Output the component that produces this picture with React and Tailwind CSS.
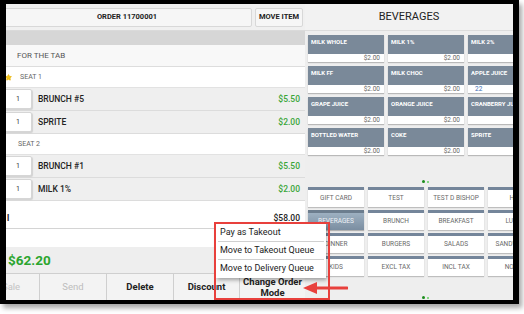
import { Star } from 'lucide-react'

const drinks = [
  { name: 'MILK WHOLE', price: '$2.00' },
  { name: 'MILK 1%', price: '$2.00' },
  { name: 'MILK 2%', price: '$2.00' },
  { name: 'MILK FF', price: '$2.00' },
  { name: 'MILK CHOC', price: '$2.00' },
  { name: 'APPLE JUICE', price: '$2.00', count: '22' },
  { name: 'GRAPE JUICE', price: '$2.00' },
  { name: 'ORANGE JUICE', price: '$2.00' },
  { name: 'CRANBERRY JUICE', price: '$2.00' },
  { name: 'BOTTLED WATER', price: '$2.00' },
  { name: 'COKE', price: '$2.00' },
  { name: 'SPRITE', price: '$2.00' },
]

const categories = [
  'GIFT CARD', 'TEST', 'TEST D BISHOP', 'HOT',
  'BEVERAGES', 'BRUNCH', 'BREAKFAST', 'LUNCH',
  'DINNER', 'BURGERS', 'SALADS', 'SANDWICHES',
  'KIDS', 'EXCL TAX', 'INCL TAX', 'NO TAX',
]

function ItemRow({ name, price }) {
  return (
    <div className="h-[23px] flex items-center bg-[#efefef] border-b border-[#dcdcdc] pr-[5px]">
      <div className="ml-[-2px] w-[28px] h-[20px] bg-white border border-[#d6d6d6] rounded-[2px] shadow-[1px_1px_1px_rgba(0,0,0,0.12)] flex items-center justify-center text-[7px] text-[#333]">
        1
      </div>
      <span className="ml-[6px] text-[8.5px] font-medium text-[#222]">{name}</span>
      <span className="ml-auto text-[8.5px] font-medium text-[#3aa63a]">{price}</span>
    </div>
  )
}

function SeatRow({ label, star }) {
  return (
    <div className="h-[21px] flex items-center bg-white border-b border-[#e2e2e2] pl-[3px]">
      {star ? (
        <Star size={7} className="ml-[-4px] mr-[8px] text-[#e8b100] fill-[#f3c21a]" />
      ) : (
        <span className="w-[9px]" />
      )}
      <span className="text-[7px] text-[#666]">{label}</span>
    </div>
  )
}

function DrinkTile({ d }) {
  return (
    <div className="w-[76px] h-[27px] flex flex-col shadow-[0_1px_1px_rgba(0,0,0,0.22)]">
      <div className="h-[19px] bg-[#7a8999] px-[3px] pt-[4px] text-[6px] font-bold leading-none text-white whitespace-nowrap overflow-hidden">
        {d.name}
      </div>
      <div className="h-[8px] bg-white flex items-center justify-between px-[4px] text-[6.5px] leading-none">
        <span className="pl-[3px] text-[#3d6db4]">{d.count || ''}</span>
        <span className="text-[#666]">{d.price}</span>
      </div>
    </div>
  )
}

function CategoryTile({ label }) {
  const active = label === 'BEVERAGES'
  return (
    <div
      className={
        active
          ? 'h-[20px] border-t-[3px] border-[#6c7d8e] bg-gradient-to-b from-[#9db0c1] to-[#7b8ea1] flex items-center justify-center text-[6.5px] text-[#eef2f6] whitespace-nowrap overflow-hidden shadow-[0_1px_1px_rgba(0,0,0,0.25)]'
          : 'h-[20px] border-t-[3px] border-[#74859a] bg-white flex items-center justify-center text-[6.5px] text-[#6a6a6a] whitespace-nowrap overflow-hidden shadow-[0_1px_1px_rgba(0,0,0,0.2)]'
      }
    >
      {label}
    </div>
  )
}

function Dots() {
  return (
    <div className="ml-[117px] h-[3px] flex items-center gap-[2px]">
      <span className="w-[3px] h-[3px] rounded-full bg-[#1c8c1c]" />
      <span className="w-[2px] h-[2px] rounded-full bg-[#63d063]" />
    </div>
  )
}

export default function App() {
  return (
    <div className="relative w-[524px] h-[314px] bg-white overflow-hidden font-['Roboto',sans-serif]">
      <div className="w-[519px] h-[304px] border-l-[6px] border-r-[6px] border-t-[4px] border-b-[4px] border-black shadow-[3px_4px_5px_rgba(0,0,0,0.35)] flex overflow-hidden bg-[#eeeeee]">
        {/* order panel */}
        <div className="w-[299px] shrink-0 flex flex-col bg-white">
          <div className="h-[27px] flex items-center gap-[3px] pr-[2px] bg-[#f0f0f0] border-b border-[#dadada]">
            <div className="ml-[-4px] flex-1 h-[19px] bg-[#f6f6f6] border border-[#d8d8d8] rounded-[2px] flex items-center justify-center text-[7.5px] font-bold text-[#222]">
              ORDER 11700001
            </div>
            <div className="w-[48px] h-[19px] bg-[#f6f6f6] border border-[#d8d8d8] rounded-[2px] flex items-center justify-center text-[7.5px] font-bold text-[#222]">
              MOVE ITEM
            </div>
          </div>
          <div className="h-[14px] bg-[#d6d6d6]" />
          <div className="h-[22px] flex items-center bg-[#f8f8f8] border-b border-[#dddddd] pl-[11px] text-[8px] text-[#555]">
            FOR THE TAB
          </div>
          <SeatRow label="SEAT 1" star />
          <ItemRow name="BRUNCH #5" price="$5.50" />
          <ItemRow name="SPRITE" price="$2.00" />
          <SeatRow label="SEAT 2" />
          <ItemRow name="BRUNCH #1" price="$5.50" />
          <ItemRow name="MILK 1%" price="$2.00" />
          <div className="h-[8px] bg-white" />
          <div className="h-[20px] flex items-center bg-white border-b border-[#d4d4d4] pl-[1px] pr-[5px]">
            <span className="text-[8.5px] font-bold text-[#222]">l</span>
            <span className="ml-auto text-[8.5px] font-medium text-[#222]">$58.00</span>
          </div>
          <div className="h-[18px] bg-white" />
          <div className="h-[26px] flex items-center bg-[#eeeeee] pl-[2px] text-[13.5px] font-bold text-[#2ba52e]">
            $62.20
          </div>
          <div className="flex-1 flex bg-[#f3f3f3] border-t border-[#cfcfcf] text-[9.5px]">
            <div className="w-[34px] border-r border-[#cfcfcf] flex items-center overflow-hidden">
              <span className="ml-[-4px] text-[#c4c4c4]">Sale</span>
            </div>
            <div className="w-[67px] border-r border-[#cfcfcf] flex items-center justify-center text-[#bdbdbd]">Send</div>
            <div className="w-[67px] border-r border-[#cfcfcf] flex items-center justify-center font-bold text-[#222]">Delete</div>
            <div className="w-[66px] border-r border-[#cfcfcf] flex items-center justify-center font-bold text-[#222]">Discount</div>
            <div className="flex-1 flex items-center justify-center text-center leading-[11px] font-bold text-[#222]">
              Change Order<br />Mode
            </div>
          </div>
        </div>

        {/* menu panel */}
        <div className="flex-1 min-w-0 flex flex-col overflow-hidden bg-[#eeeeee]">
          <div className="h-[27px] shrink-0 flex items-center justify-center bg-[#f2f2f2] border-b border-[#dcdcdc] text-[11px] text-[#222]">
            BEVERAGES
          </div>
          <div className="mt-[4px] pl-[3px] grid grid-cols-[repeat(3,76px)] gap-x-[4px] gap-y-[4px] w-max">
            {drinks.map((d) => (
              <DrinkTile key={d.name} d={d} />
            ))}
          </div>
          <div className="mt-[25px]">
            <Dots />
          </div>
          <div className="mt-[4px] pl-[3px] grid grid-cols-[repeat(4,56px)] gap-x-[4px] gap-y-[3px] w-max">
            {categories.map((c) => (
              <CategoryTile key={c} label={c} />
            ))}
          </div>
          <div className="mt-[20px]">
            <Dots />
          </div>
        </div>
      </div>

      {/* change order mode popup */}
      <div className="absolute left-[216px] top-[224px] w-[110px] h-[54px] bg-white shadow-[1px_2px_4px_rgba(0,0,0,0.35)] flex flex-col px-[2px] text-[9px] text-[#222]">
        <div className="h-[18px] flex items-center pl-[2px] border-b border-[#d0d0d0]">Pay as Takeout</div>
        <div className="h-[18px] flex items-center pl-[2px] border-b border-[#d0d0d0]">Move to Takeout Queue</div>
        <div className="h-[18px] flex items-center pl-[2px]">Move to Delivery Queue</div>
      </div>
      <div className="absolute left-[214px] top-[222px] w-[116px] h-[78px] border-2 border-[#e8403c]" />
      <svg className="absolute left-[302px] top-[281px]" width="46" height="14" viewBox="0 0 46 14">
        <line x1="12" y1="7" x2="45" y2="7" stroke="#e8403c" strokeWidth="3" strokeLinecap="round" />
        <polygon points="1,7 15,1 15,13" fill="#e8403c" />
      </svg>
    </div>
  )
}
